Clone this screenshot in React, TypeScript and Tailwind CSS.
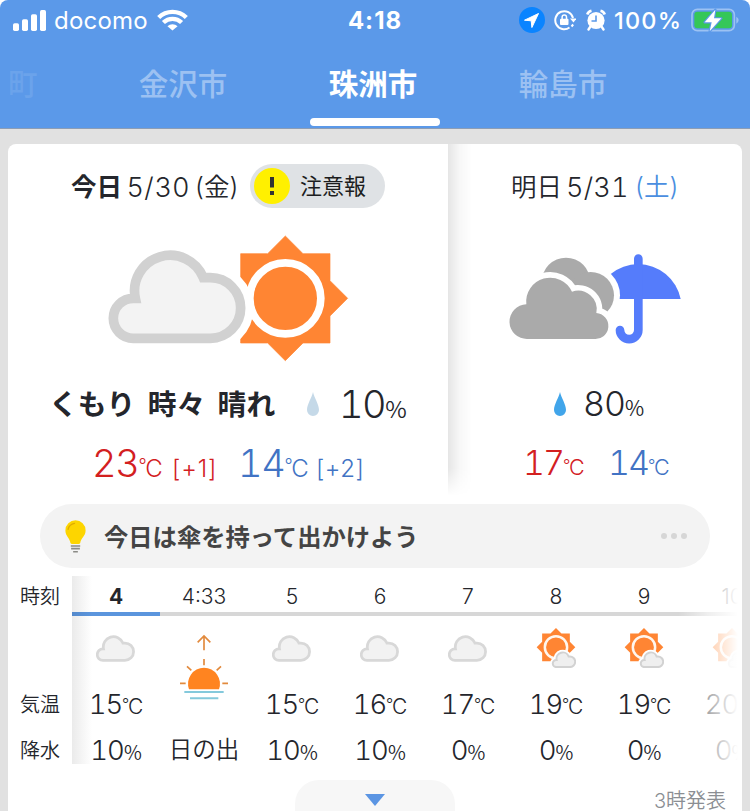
import type { ReactNode } from 'react'
import clsx from 'clsx'

const CLOUD =
  'M130 342A60 60 0 0 1 130 222L136 222A107 107 0 0 1 340 160L361 160A91 91 0 0 1 361 342Z'
const STAR =
  'M452 88H533L586 35L639 88H720V169L773 222L720 275V356H639L586 409L533 356H452V275L399 222L452 169Z'

const SmallCloud = () => (
  <svg viewBox="57 78 410 279" className="-ml-px h-[27px] w-[39px]">
    <path d={CLOUD} fill="#f2f2f2" stroke="#d8d8d8" strokeWidth="29" />
  </svg>
)

const CloudySun = () => (
  <svg viewBox="57 35 717 375" className="h-[125px] w-[239px] overflow-visible">
    <path d={STAR} fill="#ff8533" stroke="#ff8533" strokeWidth="2" strokeLinejoin="round" />
    <circle cx="586" cy="222" r="106.5" fill="none" stroke="#fff" strokeWidth="23" />
    <path d={CLOUD} fill="#fff" stroke="#fff" strokeWidth="77" />
    <path d={CLOUD} fill="#f3f3f3" stroke="#d1d1d1" strokeWidth="29" />
  </svg>
)

const SunCloud = () => (
  <svg viewBox="109 175 120 120" className="h-10 w-10">
    <g transform="translate(-12.7 164.2) scale(.31)">
      <path d={STAR} fill="#ff8533" />
      <circle cx="586" cy="222" r="108" fill="none" stroke="#fff6ee" strokeWidth="24" />
    </g>
    <g transform="translate(147 232) scale(.176)">
      <path d={CLOUD} fill="#fff" stroke="#fff" strokeWidth="95" />
      <path d={CLOUD} fill="#efefef" stroke="#d2d2d2" strokeWidth="34" />
    </g>
  </svg>
)

const FRONT_CLOUD =
  'M260 598A52 52 0 0 1 257 494A72 72 0 0 1 394 456A56 56 0 0 1 467 520A39 39 0 0 1 461 598Z'

const CloudRain = () => (
  <svg viewBox="208 343 513 270" className="h-[90px] w-[171px] overflow-visible">
    <path d="M465 478A130 130 0 0 1 720 478Z" fill="#557cfb" />
    <path
      d="M593 357V571A27.5 27.5 0 0 1 538 571"
      fill="none"
      stroke="#557cfb"
      strokeWidth="26"
      strokeLinecap="round"
    />
    <circle cx="450" cy="467" r="88" fill="#fff" />
    <circle cx="376" cy="427" r="73" fill="#aaa" />
    <circle cx="450" cy="467" r="70" fill="#aaa" />
    <path d={FRONT_CLOUD} fill="#fff" stroke="#fff" strokeWidth="34" />
    <path d={FRONT_CLOUD} fill="#aaa" />
  </svg>
)

const Drop = ({ className }: { className: string }) => (
  <svg viewBox="0 0 12 24" className={clsx('h-6 w-3', className)}>
    <path d="M6 0C7 5 12 12.500 12 18A6 6 0 0 1 0 18C0 12.500 5 5 6 0Z" fill="currentColor" />
  </svg>
)

const Sunrise = () => (
  <svg viewBox="540 194 144 198" className="h-[66px] w-12">
    <g fill="none" stroke="#e28a3d" strokeWidth="5">
      <path d="M612 243V202M593 219L612 200L631 219" />
      <path d="M612 269V288M561 291L574 303M663 291L650 303M540 342H557M667 342H684" />
    </g>
    <path d="M567 360A48 48 0 1 1 657 360Z" fill="#ff8420" />
    <path d="M553 368H671M570 387H655" stroke="#84c9dc" strokeWidth="6" />
  </svg>
)

const Bulb = () => (
  <svg viewBox="196 89 62 98" className="h-[33px] w-[21px]">
    <path
      d="M227 90A30 30 0 0 1 257 120C257 137 243 142 241 157Q240 160 236 160H217Q213 160 212 157C210 142 197 137 197 120A30 30 0 0 1 227 90Z"
      fill="#fdd500"
    />
    <path d="M205 117Q208 102 224 99" fill="none" stroke="#e0ac00" strokeWidth="4" strokeLinecap="round" />
    <path d="M213 166H241M214 174H240M220 183H234" stroke="#8b8b86" strokeWidth="4.500" />
  </svg>
)

const StatusBar = () => (
  <div className="flex h-10 items-center text-white">
    <div className="flex w-[335px] items-center pl-[13px]">
      <svg viewBox="39 27 99 63" className="h-[21px] w-[33px]" fill="currentColor">
        <rect x="39" y="67" width="18" height="23" rx="5" />
        <rect x="66" y="55" width="18" height="35" rx="5" />
        <rect x="93" y="40" width="18" height="50" rx="5" />
        <rect x="120" y="27" width="18" height="63" rx="5" />
      </svg>
      <span className="ml-2 w-[95px] pt-0.5 text-[24px] leading-none tracking-[0.2px]">docomo</span>
      <svg viewBox="472 29 92 65" className="ml-2 h-[22px] w-[31px]" fill="none" stroke="currentColor" strokeWidth="13">
        <path d="M477 54A59 59 0 0 1 559 54" />
        <path d="M491 69A39 39 0 0 1 545 69" />
        <path d="M518 93L503 80A22 22 0 0 1 533 80Z" fill="currentColor" stroke="none" />
      </svg>
    </div>
    <div className="w-20 pt-0.5 text-center text-[24px] leading-none font-bold tracking-[1px]">4:18</div>
    <div className="flex flex-1 items-center pl-[104px]">
      <svg viewBox="0 0 26 26" className="size-[26px]">
        <circle cx="13" cy="13" r="13" fill="#0a84ff" />
        <path d="M19.500 6.500L5.500 13.200L12.200 13.800L12.900 20.500Z" fill="#fff" stroke="#fff" strokeLinejoin="round" />
      </svg>
      <svg viewBox="0 0 22 22" className="ml-[9px] size-[22px]" fill="none" stroke="currentColor" strokeWidth="2">
        <path d="M15.500 18.500A9 9 0 1 1 19 9" />
        <path d="M16 9.500H22.500L19.500 13.500Z" fill="currentColor" stroke="none" />
        <path d="M17.500 17.500L19.200 15.500" />
        <rect x="6" y="9.800" width="8.500" height="6.200" rx="1" fill="currentColor" stroke="none" />
        <path d="M8.100 10.500V8.300A2.200 2.200 0 0 1 12.500 8.300V10.500" strokeWidth="1.500" />
      </svg>
      <svg viewBox="0 0 20 22" className="ml-[10px] h-[22px] w-5" fill="none" stroke="currentColor">
        <circle cx="10" cy="11.500" r="8.600" fill="currentColor" stroke="none" />
        <path d="M1.200 5.500A6 6 0 0 1 5.500 1.800M18.800 5.500A6 6 0 0 0 14.500 1.800" strokeWidth="2.600" />
        <path d="M4.500 17.500L2.500 20.500M15.500 17.500L17.500 20.500" strokeWidth="2.400" strokeLinecap="round" />
        <path d="M10 6.500V12H5.500" stroke="#5b99e9" strokeWidth="1.600" />
      </svg>
      <span className="ml-2 w-[69px] pt-0.5 text-[23.500px] leading-none font-medium tracking-[1.200px]">100%</span>
      <svg viewBox="947 22 144 72" className="ml-2 h-6 w-12">
        <rect x="950" y="26" width="127" height="64" rx="16" fill="none" stroke="#9cc2f3" strokeWidth="5" />
        <path d="M1083 48Q1090 52 1090 58Q1090 65 1083 69Z" fill="#9cc2f3" />
        <rect x="957" y="33" width="113" height="50" rx="9" fill="#35c759" />
        <path
          d="M1020 27L988 65H1009L1003 92L1038 53H1016Z"
          fill="#fff"
          stroke="#5b99e9"
          strokeWidth="7"
          paintOrder="stroke"
          strokeLinejoin="round"
        />
      </svg>
    </div>
  </div>
)

const Tabs = () => (
  <div className="flex h-[88px] overflow-hidden text-[29.500px] leading-none font-medium text-[#9cc1f2]">
    <div className="w-[88px] shrink-0 pt-[30px] pl-[8px] text-[#6ba3eb]">町</div>
    <div className="w-[190px] shrink-0 pt-[30px] text-center">金沢市</div>
    <div className="flex w-[190px] shrink-0 flex-col items-center justify-between pt-[30px] pb-0.5 font-bold text-white">
      珠洲市
      <div className="ml-1 h-2 w-[130px] rounded-full bg-white" />
    </div>
    <div className="w-[190px] shrink-0 pt-[30px] text-center">輪島市</div>
  </div>
)

const Celsius = () => (
  <>
    <span className="relative -top-[0.26em] text-[0.75em] leading-none">°</span>
    <span className="-ml-[0.06em]">C</span>
  </>
)

type ValueProps = { value: ReactNode; unit: 'c' | '%'; className?: string; unitClass: string }

const Value = ({ value, unit, className, unitClass }: ValueProps) => (
  <span className={clsx('flex items-baseline leading-none whitespace-nowrap', className)}>
    <span className="font-light tabular-nums">{value}</span>
    <span className={clsx('leading-none tracking-normal', unitClass)}>
      {unit === 'c' ? (
        <span className="font-light">
          <Celsius />
        </span>
      ) : (
        <span className="font-['Noto_Sans_CJK_JP',sans-serif] font-[350]">%</span>
      )}
    </span>
  </span>
)

const Today = () => (
  <div className="w-[440px] shrink-0">
    <div className="flex h-[84px] items-center pt-0.5 pl-[63px] text-[#24262c]">
      <span className="text-[25.500px] leading-none font-bold">今日</span>
      <span className="ml-[5px] w-[68px] text-[27px] leading-none font-light tracking-[1.200px]">5/30</span>
      <span className="w-[47px] text-[25.500px] leading-none font-[350] whitespace-nowrap">(金)</span>
      <div className="-mt-0.5 ml-2 flex h-11 w-[135px] items-center rounded-full bg-[#dfe2e5] pl-1">
        <div className="flex size-9 items-center justify-center rounded-full bg-[#fff000]">
          <svg viewBox="0 0 6 18" className="h-[18px] w-1.5" fill="#333">
            <path d="M1 0H5V10.500H1ZM1 14H5V18H1Z" />
          </svg>
        </div>
        <span className="ml-2.5 text-[22px] leading-none text-[#1c1d20]">注意報</span>
      </div>
    </div>
    <div className="mt-2 pl-[101px]">
      <CloudySun />
    </div>
    <div className="mt-3 flex h-[62px] items-center pl-[41px] text-[#24262c]">
      <span className="w-[229px] pt-0.5 text-[28.800px] leading-none font-bold [word-spacing:5.500px] whitespace-nowrap">
        くもり 時々 晴れ
      </span>
      <Drop className="ml-[29px] text-[#c5d9e8]" />
      <Value value="10" unit="%" className="ml-5 w-[70px] text-[38px] tracking-[-1.500px]" unitClass="text-[23.500px]" />
    </div>
    <div className="flex h-14 items-center pl-[84px]">
      <span className="flex w-[146px] items-baseline text-[#d3201f]">
        <Value value="23" unit="c" className="w-[80px] text-[38px] tracking-[-1.400px]" unitClass="text-[24px]" />
        <span className="text-[24px] leading-none font-light tracking-[0.8px]">[+1]</span>
      </span>
      <span className="flex items-baseline text-[#4173c4]">
        <Value value="14" unit="c" className="w-[78px] text-[38px] tracking-[-1.400px]" unitClass="text-[24px]" />
        <span className="text-[24px] leading-none font-light tracking-[0.5px]">[+2]</span>
      </span>
    </div>
  </div>
)

const Tomorrow = () => (
  <div className="relative flex-1">
    <div className="absolute top-0 left-0 h-[352px] w-6 bg-linear-to-r from-black/10 via-black/3 to-transparent mask-b-from-92%" />
    <div className="flex h-[84px] items-center pt-0.5 pl-[63px] leading-none text-[#24262c]">
      <span className="text-[25.500px] font-[350]">明日</span>
      <span className="ml-1 w-[69px] text-[27px] font-light tracking-[0.2px] tabular-nums">5/31</span>
      <span className="text-[25.500px] font-[350] text-[#4a8ee0]">(土)</span>
    </div>
    <div className="mt-[26px] pl-[61.500px]">
      <CloudRain />
    </div>
    <div className="mt-[29px] flex h-[62px] items-center pl-[106px] text-[#24262c]">
      <Drop className="text-[#41a5ea]" />
      <Value value="80" unit="%" className="ml-[17px] text-[34px] tracking-[-1px]" unitClass="text-[21px]" />
    </div>
    <div className="flex h-14 items-center pl-[75px]">
      <Value value="17" unit="c" className="w-[85px] text-[34px] tracking-[-2px] text-[#d3201f]" unitClass="text-[21.500px]" />
      <Value value="14" unit="c" className="text-[34px] tracking-[-2px] text-[#4173c4]" unitClass="text-[21.500px]" />
    </div>
  </div>
)

const Tip = () => (
  <div className="mx-8 flex h-16 items-center rounded-full bg-[#f3f3f3] pr-[23px] pl-[25px]">
    <Bulb />
    <span className="ml-[18px] flex-1 pt-0.5 text-[24.300px] leading-none font-bold text-[#444]">
      今日は傘を持って出かけよう
    </span>
    <div className="flex gap-1">
      <div className="size-1.5 rounded-full bg-[#d6d6d6]" />
      <div className="size-1.5 rounded-full bg-[#d6d6d6]" />
      <div className="size-1.5 rounded-full bg-[#d6d6d6]" />
    </div>
  </div>
)

const hours = [
  { time: '4', icon: 'cloud', temp: 15, rain: 10 },
  { time: '4:33', icon: 'sunrise', label: '日の出' },
  { time: '5', icon: 'cloud', temp: 15, rain: 10 },
  { time: '6', icon: 'cloud', temp: 16, rain: 10 },
  { time: '7', icon: 'cloud', temp: 17, rain: 0 },
  { time: '8', icon: 'sun', temp: 19, rain: 0 },
  { time: '9', icon: 'sun', temp: 19, rain: 0 },
  { time: '10', icon: 'sun', temp: 20, rain: 0 },
]

const Hourly = () => (
  <div className="flex h-[200px] text-[#24262c]">
    <div className="w-16 shrink-0 pl-3 text-[20px] leading-none font-[350]">
      <div className="flex h-10 items-center pt-0.5">時刻</div>
      <div className="mt-[68px] flex h-10 items-center pt-0.5">気温</div>
      <div className="mt-1.5 flex h-10 items-center pt-0.5">降水</div>
    </div>
    <div className="relative flex w-[666px] overflow-hidden">
      {hours.map((h, i) => (
        <div key={h.time} className="flex w-[88px] shrink-0 flex-col items-center">
          <div
            className={clsx(
              'flex h-10 w-full shrink-0 items-center justify-center border-b-4 pt-1 text-[21px] leading-none',
              i === 0 ? 'border-[#5b95dd] font-bold' : 'border-[#d7d7d7] font-light'
            )}
          >
            {h.time}
          </div>
          {h.label ? (
            <>
              <div className="flex h-[94px] shrink-0 items-center pt-2">
                <Sunrise />
              </div>
              <div className="mt-[26px] flex h-7 items-center text-[23.500px] leading-none font-[350]">{h.label}</div>
            </>
          ) : (
            <>
              <div className="flex h-16 shrink-0 items-center">
                {h.icon === 'cloud' ? <SmallCloud /> : <SunCloud />}
              </div>
              <Value value={h.temp} unit="c" className="mt-[11px] h-7 text-[27.500px] tracking-[-1.200px]" unitClass="text-[21px]" />
              <Value value={h.rain} unit="%" className="mt-[18px] h-7 text-[27.500px] tracking-[-1px]" unitClass="text-[19.500px]" />
            </>
          )}
        </div>
      ))}
      <div className="absolute top-0 left-0 h-[188px] w-5 bg-linear-to-r from-black/8 to-transparent" />
      <div className="absolute inset-y-0 right-0 w-[60px] bg-linear-to-r from-transparent via-white/60 to-white" />
    </div>
  </div>
)

export default function App() {
  return (
    <div
      lang="ja"
      className="h-[811px] w-[750px] overflow-hidden bg-white font-['Inter','Noto_Sans_CJK_JP',sans-serif]"
    >
      <header className="rounded-t-lg border-b border-[#8c9db5] bg-[#5b99e9]">
        <StatusBar />
        <Tabs />
      </header>
      <main className="h-[682px] bg-[#e1e1e1] px-2 pt-[15px]">
        <div className="h-[680px] rounded-t-lg bg-white">
          <div className="flex h-[360px]">
            <Today />
            <Tomorrow />
          </div>
          <Tip />
          <div className="h-2" />
          <Hourly />
          <div className="mt-1 flex">
            <div className="ml-[287px] flex h-16 w-40 justify-center rounded-3xl bg-[#f7f7f7] pt-3.5">
              <svg viewBox="0 0 20 12" className="h-3 w-5">
                <path d="M0 0H20L10 12Z" fill="#5b95e3" />
              </svg>
            </div>
            <span className="flex-1 pt-[11px] pr-4 text-right text-[20px] leading-none font-[350] text-[#8b8e93]">
              3時発表
            </span>
          </div>
        </div>
      </main>
    </div>
  )
}
